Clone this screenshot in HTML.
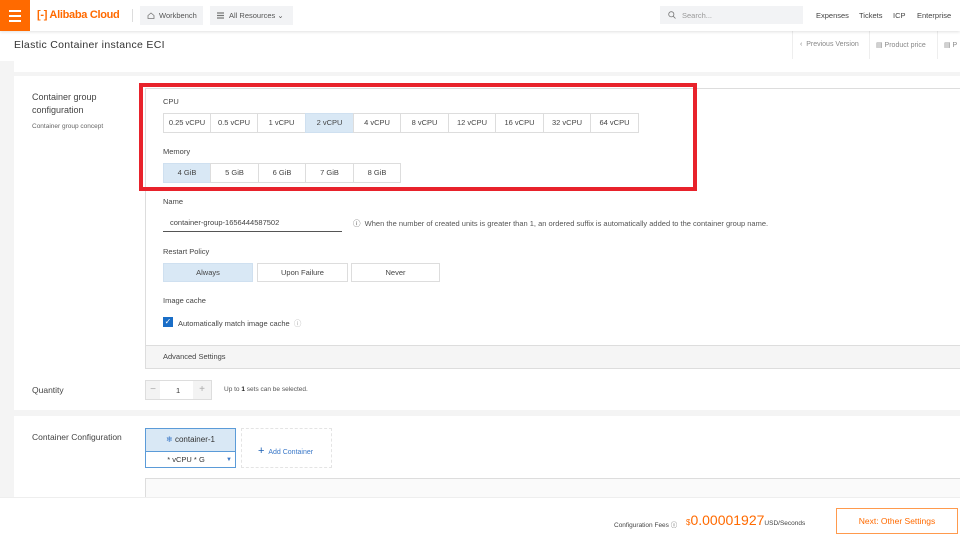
<!DOCTYPE html>
<html><head><style>
*{box-sizing:border-box;margin:0;padding:0}
body{width:960px;height:540px;overflow:hidden;background:#f4f4f4;font-family:"Liberation Sans",sans-serif;color:#333;position:relative;font-size:8px}
.abs{position:absolute}
.hdr{left:0;top:0;width:960px;height:31px;background:#fff;box-shadow:0 1px 3px rgba(0,0,0,.12);z-index:3}
.btn{position:absolute;border:1px solid #ddd;background:#fff;text-align:center;font-size:7.5px;color:#444}
.sel{background:#d9e8f5;border-color:#cfe0f0}
</style></head><body>
<div class="abs hdr">
 <div class="abs" style="left:0;top:0;width:30px;height:31px;background:#ff6a00">
  <div class="abs" style="left:9px;top:10px;width:12px;height:1.5px;background:#fff"></div>
  <div class="abs" style="left:9px;top:15px;width:12px;height:1.5px;background:#fff"></div>
  <div class="abs" style="left:9px;top:20px;width:12px;height:1.5px;background:#fff"></div>
 </div>
 <div class="abs" style="left:37px;top:9px;font-size:11px;color:#ff6a00;font-weight:bold;letter-spacing:-0.3px">[-] Alibaba Cloud</div>
 <div class="abs" style="left:132px;top:9px;width:1px;height:13px;background:#ddd"></div>
 <div class="abs" style="left:140px;top:6px;width:63px;height:19px;background:#f2f3f5;font-size:7.5px;color:#555;padding:5px 0 0 19px">Workbench
  <svg class="abs" style="left:7px;top:6px" width="8" height="7" viewBox="0 0 8 7"><path d="M1 3.5L4 1l3 2.5V6.5H1z" fill="none" stroke="#777" stroke-width="0.8"/></svg></div>
 <div class="abs" style="left:210px;top:6px;width:83px;height:19px;background:#f2f3f5;font-size:7.5px;color:#555;padding:5px 0 0 19px">All Resources ⌄
  <svg class="abs" style="left:7px;top:6px" width="7" height="7" viewBox="0 0 7 7"><path d="M0 1h7M0 3.5h7M0 6h7" stroke="#777" stroke-width="1.2"/></svg></div>
 <div class="abs" style="left:660px;top:6px;width:143px;height:18px;background:#f2f3f5;font-size:7.5px;color:#999;padding:5px 0 0 22px">Search...
  <svg class="abs" style="left:8px;top:5px" width="8" height="8" viewBox="0 0 8 8"><circle cx="3.3" cy="3.3" r="2.6" fill="none" stroke="#777" stroke-width="0.8"/><path d="M5.2 5.2L7.5 7.5" stroke="#777" stroke-width="0.8"/></svg></div>
 <div class="abs" style="left:816px;top:11px;font-size:7.5px;color:#444">Expenses</div>
 <div class="abs" style="left:859px;top:11px;font-size:7.5px;color:#444">Tickets</div>
 <div class="abs" style="left:893px;top:11px;font-size:7.5px;color:#444">ICP</div>
 <div class="abs" style="left:917px;top:11px;font-size:7.5px;color:#444">Enterprise</div>
</div>
<div class="abs" style="left:0;top:31px;width:960px;height:30px;background:#fff"></div>
<div class="abs" style="left:14px;top:39px;font-size:10.5px;color:#333;letter-spacing:.3px">Elastic Container instance ECI</div>
<div class="abs" style="left:792px;top:31px;width:1px;height:28px;background:#eee"></div>
<div class="abs" style="left:800px;top:41px;font-size:7px;color:#888">‹&nbsp;&nbsp;Previous Version</div>
<div class="abs" style="left:869px;top:31px;width:1px;height:28px;background:#eee"></div>
<div class="abs" style="left:876px;top:41px;font-size:7px;color:#888">▤&nbsp;Product price</div>
<div class="abs" style="left:937px;top:31px;width:1px;height:28px;background:#eee"></div>
<div class="abs" style="left:944px;top:41px;font-size:7px;color:#888">▤ P</div>
<div class="abs" style="left:14px;top:61px;width:946px;height:11px;background:#fff"></div>
<div class="abs" style="left:14px;top:76px;width:946px;height:334px;background:#fff"></div>
<div class="abs" style="left:14px;top:416px;width:946px;height:81px;background:#fff"></div>
<div class="abs" style="left:32px;top:91px;font-size:9px;line-height:13px;color:#444">Container group<br>configuration</div>
<div class="abs" style="left:32px;top:123px;font-size:6.5px;color:#666">Container group concept</div>
<div class="abs" style="left:145px;top:88px;width:815px;height:281px;border-left:1px solid #ddd;border-top:1px solid #ddd;border-bottom:1px solid #ddd"></div>
<div class="abs" style="left:163px;top:97px;font-size:7.5px;color:#444">CPU</div>
<div class="btn" style="left:163px;top:113px;width:48px;height:20px;line-height:18px">0.25 vCPU</div>
<div class="btn" style="left:210px;top:113px;width:48px;height:20px;line-height:18px">0.5 vCPU</div>
<div class="btn" style="left:257px;top:113px;width:49px;height:20px;line-height:18px">1 vCPU</div>
<div class="btn sel" style="left:305px;top:113px;width:49px;height:20px;line-height:18px">2 vCPU</div>
<div class="btn" style="left:353px;top:113px;width:48px;height:20px;line-height:18px">4 vCPU</div>
<div class="btn" style="left:400px;top:113px;width:49px;height:20px;line-height:18px">8 vCPU</div>
<div class="btn" style="left:448px;top:113px;width:48px;height:20px;line-height:18px">12 vCPU</div>
<div class="btn" style="left:495px;top:113px;width:49px;height:20px;line-height:18px">16 vCPU</div>
<div class="btn" style="left:543px;top:113px;width:48px;height:20px;line-height:18px">32 vCPU</div>
<div class="btn" style="left:590px;top:113px;width:49px;height:20px;line-height:18px">64 vCPU</div>
<div class="abs" style="left:163px;top:147px;font-size:7.5px;color:#444">Memory</div>
<div class="btn sel" style="left:163px;top:163px;width:48px;height:20px;line-height:18px">4 GiB</div>
<div class="btn" style="left:210px;top:163px;width:49px;height:20px;line-height:18px">5 GiB</div>
<div class="btn" style="left:258px;top:163px;width:48px;height:20px;line-height:18px">6 GiB</div>
<div class="btn" style="left:305px;top:163px;width:49px;height:20px;line-height:18px">7 GiB</div>
<div class="btn" style="left:353px;top:163px;width:48px;height:20px;line-height:18px">8 GiB</div>
<div class="abs" style="left:139px;top:83px;width:558px;height:108px;border:4px solid #e8222b"></div>
<div class="abs" style="left:163px;top:197px;font-size:7.5px;color:#444">Name</div>
<div class="abs" style="left:163px;top:212px;width:179px;height:20px;border-bottom:1px solid #555;font-size:7.5px;color:#444;padding:6px 0 0 7px">container-group-1656444587502</div>
<div class="abs" style="left:353px;top:218px;font-size:7.5px;color:#555">ⓘ&nbsp; When the number of created units is greater than 1, an ordered suffix is automatically added to the container group name.</div>
<div class="abs" style="left:163px;top:247px;font-size:7.5px;color:#444">Restart Policy</div>
<div class="btn sel" style="left:163px;top:263px;width:90px;height:19px;line-height:17px">Always</div>
<div class="btn" style="left:257px;top:263px;width:91px;height:19px;line-height:17px">Upon Failure</div>
<div class="btn" style="left:351px;top:263px;width:89px;height:19px;line-height:17px">Never</div>
<div class="abs" style="left:163px;top:296px;font-size:7.5px;color:#444">Image cache</div>
<div class="abs" style="left:163px;top:317px;width:10px;height:10px;background:#1a6ec7;color:#fff;font-size:8px;line-height:10px;text-align:center">✓</div>
<div class="abs" style="left:178px;top:318px;font-size:7.5px;color:#444">Automatically match image cache&nbsp; <span style="color:#aaa">ⓘ</span></div>
<div class="abs" style="left:146px;top:345px;width:814px;height:23px;background:#f5f5f5;border-top:1px solid #ddd;font-size:7.5px;color:#444;padding:6px 0 0 17px">Advanced Settings</div>
<div class="abs" style="left:32px;top:385px;font-size:8.5px;color:#444">Quantity</div>
<div class="abs" style="left:145px;top:380px;width:67px;height:20px;border:1px solid #ddd;background:#fff">
 <div class="abs" style="left:0;top:0;width:14px;height:18px;background:#f3f3f3;color:#aaa;text-align:center;line-height:18px;font-size:10px">−</div>
 <div class="abs" style="left:30px;top:5px;font-size:7.5px">1</div>
 <div class="abs" style="right:0;top:0;width:18px;height:18px;background:#f3f3f3;color:#aaa;text-align:center;line-height:18px;font-size:10px">+</div>
</div>
<div class="abs" style="left:224px;top:386px;font-size:6.5px;color:#555">Up to <b style="color:#222">1</b> sets can be selected.</div>
<div class="abs" style="left:32px;top:432px;font-size:8.5px;color:#444">Container Configuration</div>
<div class="abs" style="left:145px;top:428px;width:91px;height:40px;border:1px solid #5b9bd8">
 <div style="height:22px;background:#d9e8f5;font-size:8px;text-align:center;line-height:22px;color:#333"><span style="color:#3a78c8">❄</span> container-1</div>
 <div style="height:16px;font-size:7.5px;text-align:center;line-height:16px;border-top:1px solid #5b9bd8;background:#fff">* vCPU * G <span style="color:#3a78c8;float:right;margin-right:3px;font-size:6px">▼</span></div>
</div>
<div class="abs" style="left:241px;top:428px;width:91px;height:40px;border:1px dashed #e4e4e4;font-size:7px;color:#3a78c8;padding:16px 0 0 16px"><span style="font-size:11px;color:#1a5fb4">+</span>&nbsp;&nbsp;Add Container</div>
<div class="abs" style="left:145px;top:478px;width:815px;height:20px;border-top:1px solid #ddd;border-left:1px solid #ddd;background:#fafafa"></div>
<div class="abs" style="left:0;top:497px;width:960px;height:43px;background:#fff;border-top:1px solid #eee"></div>
<div class="abs" style="left:614px;top:519px;font-size:6.5px;color:#444">Configuration Fees ⓘ</div>
<div class="abs" style="left:686px;top:512px;font-size:14px;color:#ff6a00;white-space:nowrap"><span style="font-size:8px">$</span>0.00001927<span style="font-size:6.5px;color:#444">USD/Seconds</span></div>
<div class="abs" style="left:836px;top:508px;width:122px;height:26px;border:1px solid #ff9a4d;color:#ff6a00;font-size:8.5px;text-align:center;line-height:24px">Next: Other Settings</div>
</body></html>
